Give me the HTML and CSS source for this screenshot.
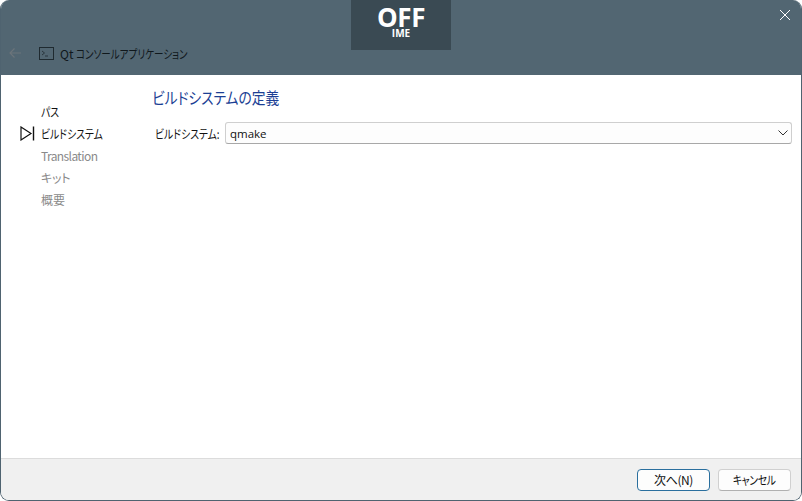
FILE: index.html
```html
<!DOCTYPE html>
<html lang="ja">
<head>
<meta charset="utf-8">
<title>Qt コンソールアプリケーション</title>
<link rel="stylesheet" href="styles.css">
</head>
<body>
<div class="window">
  <header class="titlebar">
    <div class="ime"><span class="ime-main">OFF</span><span class="ime-sub">IME</span></div>
    <svg class="close" width="12" height="12" viewBox="0 0 12 12"><path d="M1 1l10 10M11 1L1 11" stroke="#fff" stroke-width="1" fill="none"/></svg>
    <div class="titlerow">
      <svg class="back" width="14" height="12" viewBox="0 0 14 12"><path d="M13 6H2M6.500 1.500L2 6l4.500 4.500" stroke="#6b747a" stroke-width="1.200" fill="none"/></svg>
      <svg class="appicon" width="15" height="13" viewBox="0 0 15 13"><rect x="0.500" y="0.500" width="14" height="12" fill="none" stroke="#1f2a30"/><path d="M3 4L5.500 6 3 8M6 9h3" stroke="#1f2a30" stroke-width="0.800" fill="none"/></svg>
      <span class="apptitle">Qt</span><span class="apptitle kana narrow">コンソールアプリケーション</span>
    </div>
  </header>
  <div class="body">
    <nav class="steps">
      <div class="step done"><span class="narrow">パス</span></div>
      <div class="step current"><span class="narrow">ビルドシステム</span>
        <svg class="marker" width="15" height="15" viewBox="0 0 15 15"><path d="M1 1l10 6.500L1 14z" fill="none" stroke="#111" stroke-width="1.200"/><path d="M13.500 0.500v14" stroke="#111" stroke-width="1.400"/></svg>
      </div>
      <div class="step latin">Translation</div>
      <div class="step"><span class="kit">キット</span></div>
      <div class="step kanji">概要</div>
    </nav>
    <main class="content">
      <h1 class="heading"><span class="narrow">ビルドシステムの定義</span></h1>
      <div class="field">
        <label class="label"><span class="narrow">ビルドシステム:</span></label>
        <div class="select"><span>qmake</span>
          <svg width="10" height="6" viewBox="0 0 10 6"><path d="M0.500 0.500L5 5l4.500-4.500" stroke="#333" stroke-width="1" fill="none"/></svg>
        </div>
      </div>
    </main>
  </div>
  <footer class="footer">
    <button class="btn primary">次へ(N)</button>
    <button class="btn"><span class="narrow center">キャンセル</span></button>
  </footer>
</div>
</body>
</html>
```
FILE: styles.css
```css
* { box-sizing: border-box; }
html, body { margin: 0; height: 100%; background: #fff; }
body { font-family: "Noto Sans CJK JP", "Noto Sans", sans-serif; font-size: 12px; font-feature-settings: "palt"; overflow: hidden; }
.narrow { display: inline-block; white-space: nowrap; transform: scaleX(0.82); transform-origin: left center; }
.narrow.center { transform-origin: center; }
.kit { letter-spacing: -0.2px; }
.window { width: 802px; height: 501px; display: flex; flex-direction: column; border: 1px solid #4f6370; border-top: 0; border-radius: 9px; overflow: hidden; background: #fff; }
.titlebar { height: 75px; flex: none; background: #526672; position: relative; display: flex; align-items: flex-end; }
.ime { position: absolute; left: 350px; top: 0; width: 100px; height: 50px; background: #3a4a53; color: #fff; display: flex; flex-direction: column; align-items: center; font-family: "Open Sans", sans-serif; font-weight: 700; }
.ime-main { font-size: 26px; line-height: 24px; margin-top: 5px; letter-spacing: -0.4px; }
.ime-sub { font-size: 10px; line-height: 10px; margin-top: -1px; }
.close { position: absolute; right: 10px; top: 9px; }
.titlerow { display: flex; align-items: center; height: 44px; padding: 0 0 0 7px; }
.back { margin-right: 17px; }
.appicon { margin-right: 6px; }
.apptitle { color: #10181c; font-size: 12px; }
.apptitle.kana { margin-left: 3px; transform: scaleX(0.794); }
.body { flex: 1; display: flex; min-height: 0; }
.steps { width: 150px; flex: none; padding: 26px 0 0 40px; }
.step { height: 22px; line-height: 22px; color: #8a8a8a; position: relative; }
.step.latin { letter-spacing: -0.6px; }
.step.done, .step.current { color: #111; }
.marker { position: absolute; left: -21px; top: 3px; }
.content { flex: 1; min-width: 0; padding: 11px 9px 0 1px; }
.heading { margin: 0 0 14px; font-size: 16px; font-weight: 400; line-height: 22px; color: #1c3f94; }
.heading .narrow { transform: scaleX(0.86); }
.field { display: flex; align-items: center; gap: 5px; padding-left: 3px; }
.label { color: #111; width: 65px; flex: none; white-space: nowrap; }
.select { flex: 1; height: 22px; border: 1px solid #cfcfcf; border-bottom-color: #a8a8a8; border-radius: 3px; background: #fdfdfd; display: flex; align-items: center; justify-content: space-between; padding: 0 3px 0 4px; color: #111; font-family: "Open Sans", sans-serif; font-size: 11.5px; }
.footer { height: 42px; flex: none; background: #f0f0f0; border-top: 1px solid #dcdcdc; display: flex; justify-content: flex-end; align-items: center; gap: 8px; padding: 0 10px 0 0; }
.btn { width: 73px; height: 22px; padding: 0; border: 1px solid #d0d0d0; border-bottom-color: #b0b0b0; border-radius: 4px; background: #fdfdfd; color: #111; font-family: inherit; font-feature-settings: inherit; font-size: 12px; letter-spacing: -0.4px; }
.btn.primary { border: 1.500px solid #2a6f9e; }
```
